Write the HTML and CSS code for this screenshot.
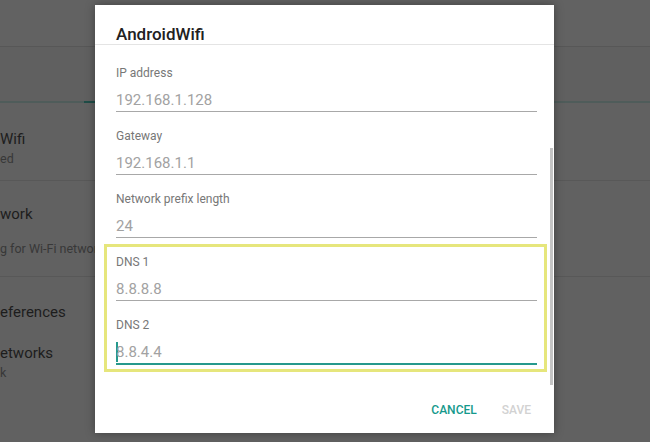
FILE: index.html
```html
<!DOCTYPE html>
<html lang="en">

<head>
    <meta charset="UTF-8">
    <meta name="viewport" content="width=device-width, initial-scale=1.0">
    <title>AndroidWifi</title>

    <link rel="stylesheet" href="styles.css">
</head>

<body>

    <div class="screen">
        <div class="appbar"></div>
        <div class="tabs">
            <div class="tab-indicator"></div>
        </div>

        <div class="row row-first">
            <div class="row-title">Wifi</div>
            <div class="row-sub">ed</div>
        </div>
        <div class="row row-second">
            <div class="row-title">work</div>
            <div class="row-sub row-status">g for Wi-Fi network</div>
        </div>
        <div class="row row-plain">
            <div class="row-title">eferences</div>
        </div>
        <div class="row row-plain">
            <div class="row-title">etworks</div>
            <div class="row-sub">k</div>
        </div>

        <div class="dialog">
            <div class="dialog-header">
                <div class="dialog-title">AndroidWifi</div>
            </div>

            <div class="dialog-content">
                <div class="field">
                    <div class="field-label">IP address</div>
                    <div class="field-value">192.168.1.128</div>
                </div>
                <div class="field">
                    <div class="field-label">Gateway</div>
                    <div class="field-value">192.168.1.1</div>
                </div>
                <div class="field">
                    <div class="field-label">Network prefix length</div>
                    <div class="field-value">24</div>
                </div>

                <div class="highlight">
                    <div class="field">
                        <div class="field-label">DNS 1</div>
                        <div class="field-value">8.8.8.8</div>
                    </div>
                    <div class="field">
                        <div class="field-label">DNS 2</div>
                        <div class="field-value focused"><span class="caret"></span>8.8.4.4</div>
                    </div>
                </div>
            </div>

            <div class="dialog-actions">
                <span class="action">CANCEL</span>
                <span class="action disabled">SAVE</span>
            </div>

            <div class="scrollbar"></div>
        </div>
    </div>

</body>

</html>
```

FILE: styles.css
```css
html,
body {
    margin: 0;
    padding: 0;
}

body {
    font-family: Roboto, "Liberation Sans", Arial, sans-serif;
    background-color: #616161;
    overflow: hidden;
}

.screen {
    position: relative;
    width: 650px;
    height: 442px;
    overflow: hidden;
    background-color: #616161;
}

.appbar {
    height: 46px;
    background-color: #626262;
    border-bottom: 1px solid #575757;
}

.tabs {
    display: flex;
    align-items: flex-end;
    height: 54px;
    background-color: #606060;
    border-bottom: 2px solid #4f5c5a;
}

.tab-indicator {
    width: 12px;
    height: 2px;
    margin-left: 84px;
    margin-bottom: -2px;
    background-color: #1f4d47;
}

/* list behind the dialog */
.row {
    padding-left: 0;
    border-bottom: 1px solid #585858;
}

.row-first {
    height: 51px;
    padding-top: 26px;
}

.row-second {
    height: 72px;
    padding-top: 23px;
}

.row-plain {
    border-bottom: none;
    padding-top: 25px;
}

.row-plain + .row-plain {
    padding-top: 21px;
}

.row-title {
    font-size: 15px;
    line-height: 20px;
    color: #1d1d1d;
}

.row-sub {
    font-size: 12.5px;
    line-height: 20px;
    color: #383838;
}

.row-status {
    margin-top: 15px;
    white-space: nowrap;
}

/* dialog */
.dialog {
    position: absolute;
    left: 95px;
    top: 5px;
    width: 459px;
    height: 428px;
    display: flex;
    flex-direction: column;
    background-color: #ffffff;
    box-shadow: 0 0 9px rgba(0, 0, 0, 0.35);
}

.dialog-header {
    padding: 19px 21px 0;
    border-bottom: 1px solid #e4e4e4;
}

.dialog-title {
    font-size: 17px;
    font-weight: 500;
    line-height: 20px;
    color: #212121;
}

.dialog-content {
    display: flex;
    flex-direction: column;
    padding: 18px 17px 0 21px;
}

.field + .field {
    margin-top: 14px;
}

.field-label {
    font-size: 12px;
    line-height: 20px;
    color: #777777;
}

.field-value {
    padding: 7px 0 1px;
    font-size: 15px;
    line-height: 20px;
    color: #a2a2a2;
    border-bottom: 1px solid #a8a8a8;
}

.field-value.focused {
    padding-bottom: 1px;
    border-bottom: 2px solid #26998d;
}

.caret {
    display: inline-block;
    width: 2px;
    height: 20px;
    margin-right: -2px;
    vertical-align: top;
    background-color: #26998d;
}

.highlight {
    margin: 6px -10px 0 -12px;
    padding: 5px 7px 4px 9px;
    border: 3px solid #e6e67c;
}

.dialog-actions {
    display: flex;
    justify-content: flex-end;
    gap: 25px;
    margin-top: auto;
    padding: 0 23px 13px 0;
}

.action {
    font-size: 12px;
    font-weight: 500;
    line-height: 20px;
    color: #15998c;
}

.action.disabled {
    color: #d2d2d2;
}

.scrollbar {
    position: absolute;
    left: 455px;
    top: 143px;
    width: 3px;
    height: 237px;
    background-color: #c4c4c4;
}
```
